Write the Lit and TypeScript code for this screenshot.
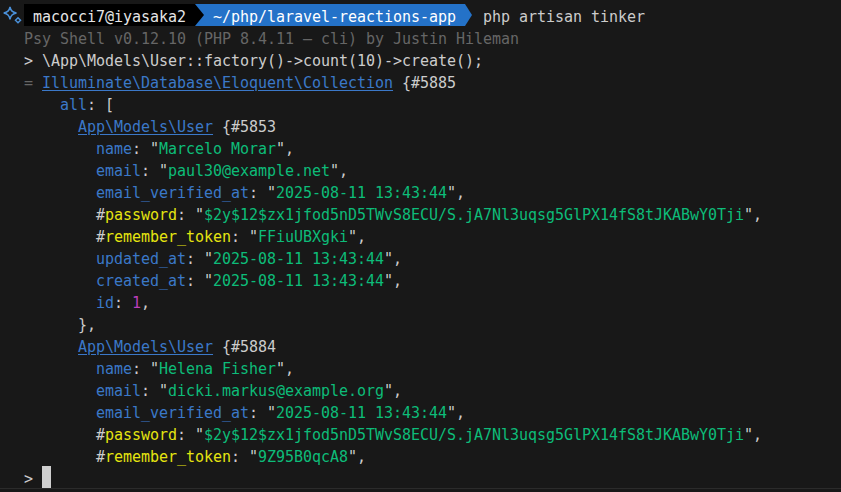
import { LitElement, html, css } from "lit";
import { customElement } from "lit/decorators.js";

type Seg = [string, string];
const t = (s: string): Seg => ["", s];
const kv = (k: string, v: string, cls = "k"): Seg[] => [[cls, k], t(': "'), ["s", v], t('",')];
const user = (id: string): Seg[] => [["l", "App\\Models\\User"], t(" {#" + id)];
const PW = "$2y$12$zx1jfod5nD5TWvS8ECU/S.jA7Nl3uqsg5GlPX14fS8tJKABwY0Tji";
const D = "2025-08-11 13:43:44";

const LINES: { i: number; s: Seg[] }[] = [
  { i: 0, s: [["g", "Psy Shell v0.12.10 (PHP 8.4.11 — cli) by Justin Hileman"]] },
  { i: 0, s: [t("> \\App\\Models\\User::factory()->count(10)->create();")] },
  { i: 0, s: [["g", "= "], ["l", "Illuminate\\Database\\Eloquent\\Collection"], t(" {#5885")] },
  { i: 4, s: [["k", "all"], t(": [")] },
  { i: 6, s: user("5853") },
  { i: 8, s: kv("name", "Marcelo Morar") },
  { i: 8, s: kv("email", "paul30@example.net") },
  { i: 8, s: kv("email_verified_at", D) },
  { i: 8, s: [t("#"), ...kv("password", PW, "y")] },
  { i: 8, s: [t("#"), ...kv("remember_token", "FFiuUBXgki", "y")] },
  { i: 8, s: kv("updated_at", D) },
  { i: 8, s: kv("created_at", D) },
  { i: 8, s: [["k", "id"], t(": "), ["n", "1"], t(",")] },
  { i: 6, s: [t("},")] },
  { i: 6, s: user("5884") },
  { i: 8, s: kv("name", "Helena Fisher") },
  { i: 8, s: kv("email", "dicki.markus@example.org") },
  { i: 8, s: kv("email_verified_at", D) },
  { i: 8, s: [t("#"), ...kv("password", PW, "y")] },
  { i: 8, s: [t("#"), ...kv("remember_token", "9Z95B0qcA8", "y")] },
];

@customElement("app-root")
export class AppRoot extends LitElement {
  static styles = css`
    :host {
      display: block;
      width: 841px;
      height: 492px;
      background: #181818;
      color: #cccccc;
      font-family: "DejaVu Sans Mono", monospace;
      font-size: 15px;
      letter-spacing: -0.03px;
      overflow: hidden;
      box-sizing: border-box;
      padding-top: 4px;
      position: relative;
    }
    .row {
      height: 22px;
      line-height: 26px;
      padding-left: 24px;
      white-space: pre;
    }
    .prompt {
      display: flex;
      align-items: stretch;
      padding-left: 3px;
    }
    .spark { width: 21px; height: 22px; flex: none; display: block; }
    .user { background: #000; color: #e5e5e5; width: 171px; padding-left: 9px; box-sizing: border-box; flex: none; }
    .path {
      background: #2472c8;
      color: #fff;
      width: 277px;
      padding-left: 18px;
      box-sizing: border-box;
      flex: none;
      clip-path: polygon(0 0, calc(100% - 7px) 0, 100% 50%, calc(100% - 7px) 100%, 0 100%);
      position: relative;
    }
    .path::before {
      content: "";
      position: absolute;
      left: 0;
      top: 0;
      bottom: 0;
      width: 9px;
      background: #000;
      clip-path: polygon(0 0, 100% 50%, 0 100%);
    }
    .cmd { margin-left: 11px; color: #cccccc; }
    .g { color: #666666; }
    .l { color: #3b78c8; text-decoration: underline; text-underline-offset: 2px; }
    .k { color: #3b78c8; }
    .s { color: #0dbc79; }
    .y { color: #e5e510; }
    .n { color: #bc3fbc; }
    .last { display: flex; align-items: flex-start; padding-left: 24px; height: 22px; line-height: 26px; }
    .gt { width: 18px; color: #cccccc; }
    .cursor { width: 9px; height: 22px; background: #cfcfcf; }
    .foot { position: absolute; left: 0; right: 0; top: 488px; height: 1px; background: #2b2b2b; }
  `;

  render() {
    return html`
      <div class="row prompt">
        <svg class="spark" viewBox="0 0 21 22" fill="none" stroke="#4a90d9" stroke-width="1.5">
          <path d="M7 3 C7.600 6.500 9 8.300 13.500 9 C9 9.700 7.600 11.500 7 15.500 C6.400 11.500 5 9.700 0.700 9 C5 8.300 6.400 6.500 7 3 Z" />
          <path d="M15 13.700 L17.500 16.200 L15 18.700 L12.500 16.200 Z" />
        </svg>
        <div class="user">macocci7@iyasaka2</div>
        <div class="path">~/php/laravel-reactions-app</div>
        <div class="cmd">php artisan tinker</div>
      </div>
      ${LINES.map(
        (l) => html`<div class="row">${" ".repeat(l.i)}${l.s.map(([c, v]) => (c ? html`<span class=${c}>${v}</span>` : v))}</div>`
      )}
      <div class="last"><span class="gt">&gt;</span><span class="cursor"></span></div>
      <div class="foot"></div>
    `;
  }
}
